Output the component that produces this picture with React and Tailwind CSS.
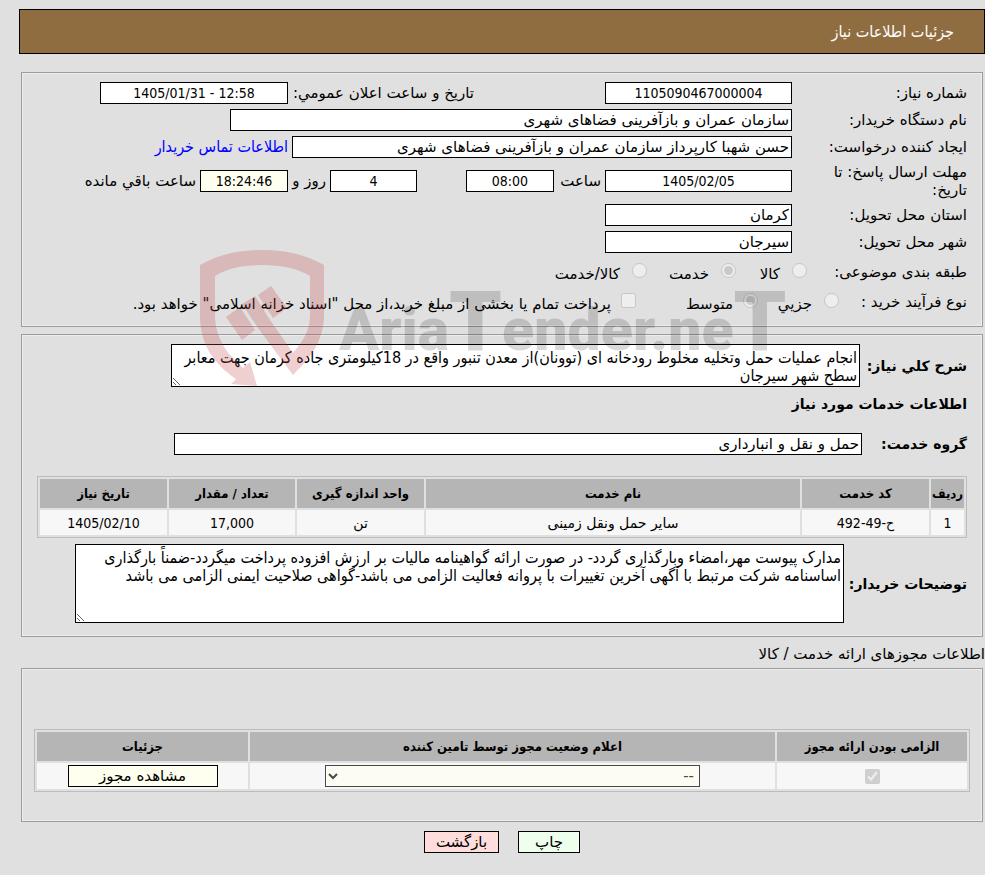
import React from 'react';

const textField = 'h-[22px] border border-black bg-white px-[2px] text-black outline-none';
const numberField = "h-[22px] border border-black px-[2px] text-center font-['DejaVu_Sans_Condensed',sans-serif] text-sm text-black outline-none";
const textArea = "border border-black bg-white px-[2px] py-1 font-['DejaVu_Sans_Condensed',sans-serif] text-base leading-[18px] outline-none";
const labelBase = 'w-[175px] shrink-0 pl-8';
const boldLabel = 'shrink-0 text-sm font-bold';
const frame = 'mr-[2px] ml-[21px] border border-[#9c9c9c] shadow-[inset_0_0_0_1px_#eeeeee]';
const headCell = "h-[29px] bg-[#b5b5b5] p-0 text-center font-['DejaVu_Sans_Condensed',sans-serif] text-[13px] font-bold";
const bodyCell = 'h-[25px] bg-[#f7f7f7] px-0 py-[2px] text-center';
const numberCell = "h-[25px] bg-[#f7f7f7] px-0 py-[2px] text-center font-['DejaVu_Sans_Condensed',sans-serif]";
const gridTable = 'table-fixed border-separate border-spacing-[2px] border border-[#bcbcbc]';

function Watermark() {
  return (
    <svg
      aria-hidden="true"
      className="pointer-events-none absolute top-[248px] left-[198px] h-[140px] w-[640px]"
      viewBox="0 0 640 140"
    >
      <g fill="#c14646" opacity="0.26">
        <path
          fillRule="evenodd"
          d="M2 17 Q28 2 64 2 Q100 2 126 17 V67 C126 93 112 110 95 127 L60 80 L44 56 L57 48 L72 72 L95 105 C106 92 112 82 112 66 V28 Q94 17 64 17 Q34 17 17 28 V67 C17 90 29 106 45 120 L52 114 L59 138 L33 136 L38 131 C15 115 2 96 2 67 Z"
        />
        <path d="M28 69 L42 59 L57 82 L44 92 Z" />
        <path d="M60 47 L73 38 L89 60 L75 70 Z" />
      </g>
      <text
        direction="ltr"
        x="141"
        y="102"
        fill="#000"
        opacity="0.15"
        fontFamily="Roboto, 'Liberation Sans', sans-serif"
        fontWeight="900"
        fontSize="59"
      >
        Aria<tspan fontSize="84">T</tspan>ender.ne<tspan fontSize="84">T</tspan>
      </text>
    </svg>
  );
}

function Field({ id, label, children }) {
  return (
    <div className="flex items-center">
      <label htmlFor={id} className={labelBase}>
        {label}
      </label>
      {children}
    </div>
  );
}

function Choice({ type = 'radio', name, label, checked, labelClass }) {
  return (
    <label className="flex items-center">
      <input type={type} name={name} defaultChecked={checked} disabled className="mb-1 size-[15px]" />
      <span className={labelClass}>{label}</span>
    </label>
  );
}

function NeedInfo() {
  return (
    <fieldset className={`${frame} mt-[18px] flex flex-col gap-[5px] px-[15px] pt-[9px] pb-[13px]`}>
      <Field id="need-no" label="شماره نیاز:">
        <input id="need-no" readOnly defaultValue="1105090467000004" className={`${numberField} w-[187px] bg-white`} />
        <label htmlFor="announce" className="mr-[131px] w-[186px] shrink-0 whitespace-nowrap">
          تاریخ و ساعت اعلان عمومي:
        </label>
        <input id="announce" dir="ltr" readOnly defaultValue="1405/01/31 - 12:58" className={`${numberField} w-[188px] bg-white`} />
      </Field>
      <Field id="org" label="نام دستگاه خریدار:">
        <input id="org" readOnly defaultValue="سازمان عمران و بازآفرینی فضاهای شهری" className={`${textField} w-[562px]`} />
      </Field>
      <Field id="creator" label="ایجاد کننده درخواست:">
        <input id="creator" readOnly defaultValue="حسن شهبا کارپرداز سازمان عمران و بازآفرینی فضاهای شهری" className={`${textField} w-[500px]`} />
        <a href="#contact" className="mr-1 font-['DejaVu_Sans_Condensed',sans-serif] text-base leading-[18px] text-[#0000ff]">
          اطلاعات تماس خریدار
        </a>
      </Field>
      <Field id="deadline" label="مهلت ارسال پاسخ: تا تاریخ:">
        <input id="deadline" readOnly defaultValue="1405/02/05" className={`${numberField} w-[187px] bg-white`} />
        <label htmlFor="hour" className="w-[51px] pr-1">ساعت</label>
        <input id="hour" readOnly defaultValue="08:00" className={`${numberField} w-[88px] bg-white`} />
        <input id="days" aria-label="روز" readOnly defaultValue="4" className={`${numberField} mr-[49px] w-[87px] bg-white`} />
        <label htmlFor="days" className="w-[42px] pr-1">روز و</label>
        <input id="left" readOnly defaultValue="18:24:46" className={`${numberField} w-[88px] bg-[#fffff0]`} />
        <label htmlFor="left" className="pr-1">ساعت باقي مانده</label>
      </Field>
      <Field id="province" label="استان محل تحویل:">
        <input id="province" readOnly defaultValue="کرمان" className={`${textField} w-[187px]`} />
      </Field>
      <Field id="city" label="شهر محل تحویل:">
        <input id="city" readOnly defaultValue="سیرجان" className={`${textField} w-[187px]`} />
      </Field>
      <div className="flex h-7 items-center">
        <span className="w-[160px] shrink-0">طبقه بندی موضوعی:</span>
        <Choice name="kind" label="کالا" labelClass="w-[56px] pr-3 pt-1" />
        <Choice name="kind" label="خدمت" checked labelClass="w-[74px] pr-3 pt-1" />
        <Choice name="kind" label="کالا/خدمت" labelClass="pr-3 pt-1" />
      </div>
      <div className="flex items-center">
        <span className="w-[128px] shrink-0">نوع فرآیند خرید :</span>
        <Choice name="process" label="جزیي" labelClass="w-[66px] pr-3 pt-1" />
        <Choice name="process" label="متوسط" checked labelClass="w-[107px] pr-[10px] pt-1" />
        <Choice
          type="checkbox"
          name="treasury"
          label={'پرداخت تمام یا بخشی از مبلغ خرید،از محل "اسناد خزانه اسلامی" خواهد بود.'}
          labelClass="pr-[10px] pt-1 whitespace-nowrap"
        />
      </div>
    </fieldset>
  );
}

const services = [
  { row: 1, code: 'ح-49-492', name: 'سایر حمل ونقل زمینی', unit: 'تن', qty: '17,000', date: '1405/02/10' },
];

function ServiceInfo() {
  return (
    <fieldset className={`${frame} mt-[7px] px-[15px] pt-[9px] pb-[13px]`}>
      <div className="flex items-center">
        <label htmlFor="summary" className={`${boldLabel} w-[107px]`}>شرح کلي نياز:</label>
        <textarea
          id="summary"
          readOnly
          className={`${textArea} h-[43px] w-[689px]`}
          defaultValue="انجام عملیات حمل وتخلیه مخلوط رودخانه ای (توونان)از معدن تنبور واقع در 18کیلومتری جاده کرمان جهت معابر سطح شهر سیرجان"
        />
      </div>
      <h2 className="mt-[6px] text-sm leading-[22px] font-bold">اطلاعات خدمات مورد نیاز</h2>
      <div className="mt-[18px] flex items-center">
        <label htmlFor="group" className={`${boldLabel} w-[105px]`}>گروه خدمت:</label>
        <input id="group" readOnly defaultValue="حمل و نقل و انبارداری" className={`${textField} w-[688px]`} />
      </div>
      <table className={`${gridTable} mt-[21px] w-full`}>
        <thead>
          <tr>
            <th className={`${headCell} w-[33px]`}>ردیف</th>
            <th className={`${headCell} w-[127px]`}>کد خدمت</th>
            <th className={headCell}>نام خدمت</th>
            <th className={`${headCell} w-[127px]`}>واحد اندازه گیری</th>
            <th className={`${headCell} w-[126px]`}>تعداد / مقدار</th>
            <th className={`${headCell} w-[127px]`}>تاریخ نیاز</th>
          </tr>
        </thead>
        <tbody>
          {services.map((s) => (
            <tr key={s.row} className="text-sm leading-[18px]">
              <td className={numberCell}>{s.row}</td>
              <td className={numberCell}>{s.code}</td>
              <td className={bodyCell}>{s.name}</td>
              <td className={bodyCell}>{s.unit}</td>
              <td className={numberCell}>{s.qty}</td>
              <td className={numberCell}>{s.date}</td>
            </tr>
          ))}
        </tbody>
      </table>
      <div className="mt-[6px] flex items-center">
        <label htmlFor="notes" className={`${boldLabel} w-[123px]`}>توضیحات خریدار:</label>
        <textarea
          id="notes"
          readOnly
          className={`${textArea} h-[79px] w-[769px]`}
          defaultValue="مدارک پیوست مهر،امضاء وبارگذاری گردد- در صورت ارائه گواهینامه مالیات بر ارزش افزوده پرداخت میگردد-ضمناً بارگذاری اساسنامه شرکت مرتبط با آگهی آخرین تغییرات با پروانه فعالیت الزامی می باشد-گواهی صلاحیت ایمنی الزامی می باشد"
        />
      </div>
    </fieldset>
  );
}

function LicenseInfo() {
  return (
    <>
      <p className="mt-[7px] leading-5">اطلاعات مجوزهای ارائه خدمت / کالا</p>
      <fieldset className={`${frame} mt-1 px-3 pt-[60px] pb-[29px]`}>
        <table className={`${gridTable} w-full`}>
          <thead>
            <tr>
              <th className={`${headCell} w-[190px]`}>الزامی بودن ارائه مجوز</th>
              <th className={headCell}>اعلام وضعیت مجوز توسط تامین کننده</th>
              <th className={`${headCell} w-[211px]`}>جزئیات</th>
            </tr>
          </thead>
          <tbody>
            <tr>
              <td className={bodyCell}>
                <input type="checkbox" aria-label="الزامی بودن ارائه مجوز" defaultChecked disabled className="mx-auto block size-[15px]" />
              </td>
              <td className={bodyCell}>
                <select
                  aria-label="اعلام وضعیت مجوز"
                  disabled
                  className="mx-auto block h-[22px] w-[375px] border border-black bg-[#fffff0] px-px opacity-70"
                >
                  <option>--</option>
                </select>
              </td>
              <td className={bodyCell}>
                <button type="button" className="mx-auto block h-[22px] w-[150px] border border-black bg-[#fffff0] leading-5">
                  مشاهده مجوز
                </button>
              </td>
            </tr>
          </tbody>
        </table>
      </fieldset>
    </>
  );
}

export default function App() {
  return (
    <div
      dir="rtl"
      className="relative min-h-screen overflow-x-hidden bg-[#e0e0e0] pt-[9px] pb-5 font-['DejaVu_Sans',sans-serif] text-[15px] leading-[18px] text-black"
    >
      <header className="ml-[19px] flex h-[45px] items-center border border-black bg-[#8f6d40] px-[30px] text-white">
        <h1 className="font-['DejaVu_Sans_Condensed',sans-serif] text-base">جزئیات اطلاعات نیاز</h1>
      </header>
      <NeedInfo />
      <ServiceInfo />
      <LicenseInfo />
      <div className="mt-[9px] ml-[19px] flex justify-center gap-[19px]">
        <button type="button" className="h-[22px] w-[62px] border border-black bg-[#eeffee] leading-5">چاپ</button>
        <button type="button" className="h-[22px] w-[75px] border border-black bg-[#ffdddd] leading-5">بازگشت</button>
      </div>
      <Watermark />
    </div>
  );
}
